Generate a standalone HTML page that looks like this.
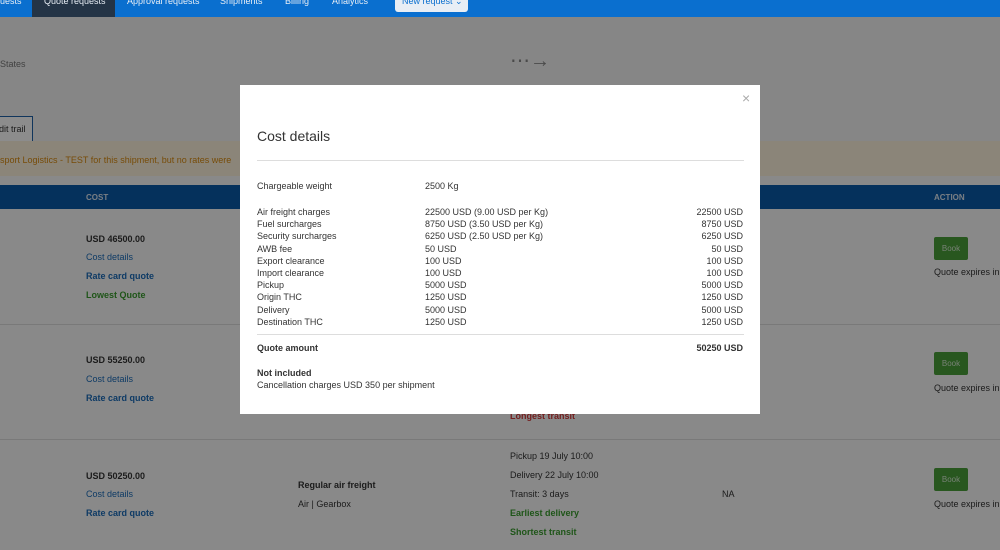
<!DOCTYPE html>
<html><head><meta charset="utf-8"><style>
*{margin:0;padding:0;box-sizing:border-box}
html,body{background:#f4f4f4}
body{width:1000px;height:550px;overflow:hidden;font-family:"Liberation Sans",sans-serif;position:relative;font-size:9px;color:#333}
.a{position:absolute;white-space:nowrap}
.nav{position:absolute;left:0;top:0;width:1000px;height:17px;background:#0a6fcf;z-index:20}
.nav span{position:absolute;top:-4px;color:#e8eef5;font-size:9px}
.b{font-weight:bold}
.lk{color:#1a6bb8;font-weight:bold}
.lk2{color:#1a6bb8}
.gr{color:#3a9c2e;font-weight:bold}
.book{position:absolute;left:934px;width:34px;height:23px;background:#4a9e3a;color:#d6ead2;font-size:8px;text-align:center;line-height:23px;border-radius:2px}
.ov{position:absolute;left:0;top:17px;width:1000px;height:533px;background:rgba(0,0,0,0.45);z-index:10}
.modal{position:absolute;left:240px;top:85px;width:520px;height:329px;background:#fff;z-index:30}
.m{position:absolute;font-size:9px;color:#333;white-space:nowrap}
.r{right:17px;text-align:right}
</style></head><body>
<div class="nav">
<div class="a" style="left:32px;top:0;width:83px;height:17px;background:#243446"></div>
<span style="left:0">uests</span><span style="left:44px">Quote requests</span><span style="left:127px">Approval requests</span><span style="left:220px">Shipments</span><span style="left:285px">Billing</span><span style="left:332px">Analytics</span>
<div class="a" style="left:395px;top:0;width:73px;height:12px;background:#e8eef5;border-radius:0 0 3px 3px"></div>
<span style="left:402px;color:#0a6fcf">New request ⌄</span>
</div>
<div class="a" style="left:0;top:59px;color:#777">States</div>
<div class="a" style="left:510px;top:48px;color:#888;font-size:20px">⋯→</div>
<div class="a" style="left:-2px;top:116px;width:35px;height:26px;border:1px solid #1e62a8;border-bottom:none;color:#333;padding:7px 0 0 0;background:#fff">dit trail</div>
<div class="a" style="left:0;top:141px;width:1000px;height:35px;background:#fdf3dc"></div>
<div class="a" style="left:0;top:155px;color:#d98a10">sport Logistics - TEST for this shipment, but no rates were</div>
<div class="a" style="left:0;top:176px;width:1000px;height:374px;background:#fafafa"></div>
<div class="a" style="left:0;top:185px;width:1000px;height:24px;background:#0a5aa8"></div>
<div class="a b" style="left:86px;top:193px;color:#dce6f0;font-size:8px">COST</div>
<div class="a b" style="left:934px;top:193px;color:#dce6f0;font-size:8px">ACTION</div>
<div class="a" style="left:0;top:324px;width:1000px;height:1px;background:#ddd"></div>
<div class="a" style="left:0;top:439px;width:1000px;height:1px;background:#ddd"></div>
<div class="a b" style="left:86px;top:234px">USD 46500.00</div>
<div class="a lk2" style="left:86px;top:252px">Cost details</div>
<div class="a lk" style="left:86px;top:271px">Rate card quote</div>
<div class="a gr" style="left:86px;top:290px">Lowest Quote</div>
<div class="a b" style="left:86px;top:355px">USD 55250.00</div>
<div class="a lk2" style="left:86px;top:374px">Cost details</div>
<div class="a lk" style="left:86px;top:393px">Rate card quote</div>
<div class="a b" style="left:510px;top:411px;color:#d23a3a">Longest transit</div>
<div class="a b" style="left:86px;top:471px">USD 50250.00</div>
<div class="a lk2" style="left:86px;top:489px">Cost details</div>
<div class="a lk" style="left:86px;top:508px">Rate card quote</div>
<div class="a b" style="left:298px;top:480px">Regular air freight</div>
<div class="a" style="left:298px;top:499px">Air | Gearbox</div>
<div class="a" style="left:510px;top:451px">Pickup 19 July 10:00</div>
<div class="a" style="left:510px;top:470px">Delivery 22 July 10:00</div>
<div class="a" style="left:510px;top:489px">Transit: 3 days</div>
<div class="a gr" style="left:510px;top:508px">Earliest delivery</div>
<div class="a gr" style="left:510px;top:527px">Shortest transit</div>
<div class="a" style="left:722px;top:489px">NA</div>
<div class="book" style="top:237px">Book</div><div class="a" style="left:934px;top:267px">Quote expires in</div>
<div class="book" style="top:352px">Book</div><div class="a" style="left:934px;top:383px">Quote expires in</div>
<div class="book" style="top:468px">Book</div><div class="a" style="left:934px;top:499px">Quote expires in</div>
<div class="ov"></div>
<div class="modal">
<div class="m" style="left:502px;top:5px;font-size:14px;color:#aaa">×</div>
<div class="m" style="left:17px;top:43px;font-size:14px;color:#333">Cost details</div>
<div class="a" style="left:17px;top:75px;width:487px;height:1px;background:#ddd"></div>
<div class="m" style="left:17px;top:96px">Chargeable weight</div><div class="m" style="left:185px;top:96px">2500 Kg</div>
<div style="position:absolute;left:0;top:121px;width:520px;line-height:12.2px">
<div class="m" style="left:17px;top:0">Air freight charges<br>Fuel surcharges<br>Security surcharges<br>AWB fee<br>Export clearance<br>Import clearance<br>Pickup<br>Origin THC<br>Delivery<br>Destination THC</div>
<div class="m" style="left:185px;top:0">22500 USD (9.00 USD per Kg)<br>8750 USD (3.50 USD per Kg)<br>6250 USD (2.50 USD per Kg)<br>50 USD<br>100 USD<br>100 USD<br>5000 USD<br>1250 USD<br>5000 USD<br>1250 USD</div>
<div class="m r" style="top:0">22500 USD<br>8750 USD<br>6250 USD<br>50 USD<br>100 USD<br>100 USD<br>5000 USD<br>1250 USD<br>5000 USD<br>1250 USD</div>
</div>
<div class="a" style="left:17px;top:249px;width:487px;height:1px;background:#ddd"></div>
<div class="m b" style="left:17px;top:258px">Quote amount</div><div class="m b r" style="top:258px">50250 USD</div>
<div class="m b" style="left:17px;top:283px">Not included</div>
<div class="m" style="left:17px;top:295px">Cancellation charges USD 350 per shipment</div>
</div>
</body></html>
